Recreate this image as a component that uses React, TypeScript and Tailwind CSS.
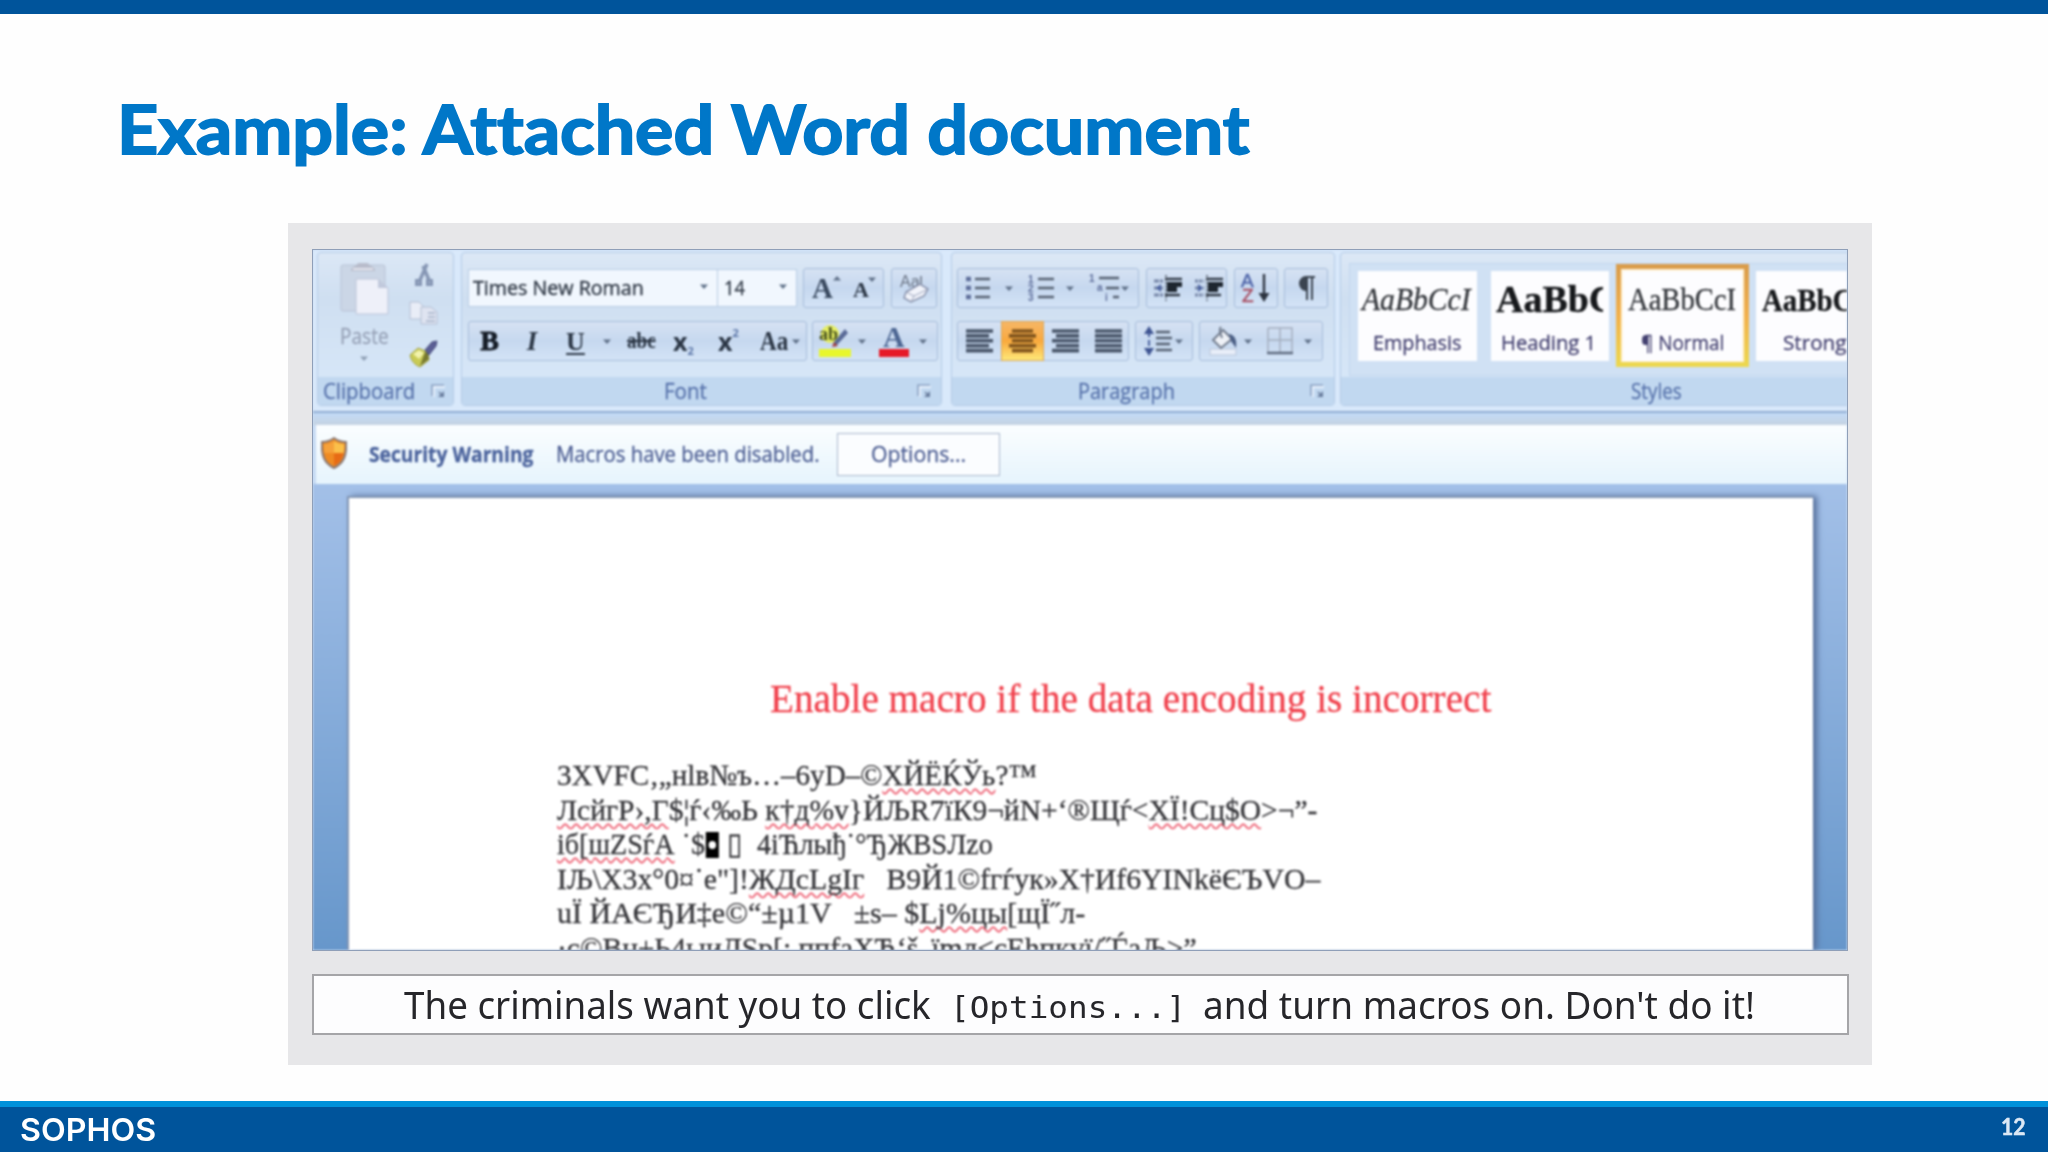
import React, { useLayoutEffect, useRef, useState } from "react";

const SANS = "font-['Open_Sans','Noto_Sans',sans-serif]";
const SERIF = "font-['Liberation_Serif',serif]";

/* Stretches a line of text horizontally so that it takes exactly `w` pixels. */
function Fit({ w, className = "", children }: { w: number; className?: string; children: React.ReactNode }) {
  const ref = useRef<HTMLSpanElement>(null);
  const [scale, setScale] = useState(1);
  useLayoutEffect(() => {
    if (ref.current) setScale(w / ref.current.offsetWidth);
  }, [w]);
  return (
    <span className={"block shrink-0 whitespace-pre " + className} style={{ width: w }}>
      <span ref={ref} className="inline-block origin-left" style={{ transform: `scaleX(${scale})` }}>
        {children}
      </span>
    </span>
  );
}

function Caret({ className = "" }: { className?: string }) {
  return (
    <svg viewBox="0 0 8 5" className={"h-[5px] w-2 shrink-0 " + className}>
      <path d="M0 0.5h8L4 5z" fill="#5f7088" />
    </svg>
  );
}

function Launcher({ className = "" }: { className?: string }) {
  return (
    <svg viewBox="0 0 15 15" className={"size-[15px] shrink-0 " + className} fill="none">
      <path d="M1 12V1h12" stroke="#8ea4c4" strokeWidth="1.6" />
      <path d="M3 13V3h11" stroke="#f3f8ff" strokeWidth="1.4" />
      <path d="M8 8l3 3" stroke="#6b7f9f" strokeWidth="1.6" />
      <path d="M13 7v6H7z" fill="#6b7f9f" />
    </svg>
  );
}

function Group({ className, label, children }: { className: string; label: React.ReactNode; children: React.ReactNode }) {
  return (
    <section className={"flex h-[154px] shrink-0 flex-col overflow-hidden rounded-[4px] border border-[#b4cbe6] bg-linear-to-b from-[#dce8f6] via-[#cfdff1] via-30% to-[#d9e9fa] " + className}>
      <div className="h-[124px] shrink-0">{children}</div>
      <div className={"flex flex-1 items-center bg-[#c1d8f0] text-[21px] leading-[28px] text-[#5873ab] [-webkit-text-stroke:0.3px] " + SANS}>{label}</div>
    </section>
  );
}

function Box({ className, children }: { className: string; children: React.ReactNode }) {
  return (
    <div className={"flex h-10 shrink-0 items-center rounded-[3px] border border-[#a6bcda] bg-linear-to-b from-[#d6e2f3] via-[#c6d8ef] via-50% to-[#d3e3f6] " + className}>
      {children}
    </div>
  );
}

function Lines({ rows, color = "#49566a" }: { rows: [number, number][]; color?: string }) {
  return (
    <svg viewBox="0 0 27 24" className="h-6 w-[27px] shrink-0" stroke={color} strokeWidth="3.6">
      {rows.map(([a, b], i) => (
        <path key={i} d={`M${a} ${2 + i * 4.9}H${b}`} />
      ))}
    </svg>
  );
}

function Indent({ flip = false }: { flip?: boolean }) {
  return (
    <svg viewBox="0 0 30 28" className="h-7 w-[30px] shrink-0" fill="none">
      <path d="M1 7h9M1 14h9M1 21h9" stroke="#7787a8" strokeWidth="3" strokeDasharray={flip ? "3 1" : "5 1"} />
      <path d={flip ? "M4 10l5 4-5 4z" : "M8 10l-5 4 5 4z"} fill="#4b62a0" />
      <path d="M13 1v26" stroke="#5b6572" strokeWidth="1.6" strokeDasharray="2 1.5" />
      <path d="M12 5h17M12 21h15" stroke="#343d49" strokeWidth="2.6" />
      <path d="M14 10.5h15M14 15.500h10" stroke="#1e262f" strokeWidth="4.8" />
    </svg>
  );
}

function Clipboard() {
  return (
    <Group
      className="w-[137px]"
      label={
        <>
          <Fit w={92} className="ml-[5px]">Clipboard</Fit>
          <Launcher className="ml-4" />
        </>
      }
    >
      <div className="flex pt-[6px] pl-[20px]">
        <div className="flex w-[52px] flex-col items-center">
          <svg viewBox="0 0 52 58" className="h-[58px] w-[52px]">
            <rect x="3" y="6" width="44" height="46" rx="2" fill="#cbd6e6" stroke="#b9c3d6" />
            <path d="M13 12c0-5 5-4 7-8h10c2 4 7 3 7 8z" fill="#b8bccb" />
            <path d="M15 10h20" stroke="#e5e6ef" strokeWidth="2" />
            <path d="M18 20h22l10 9v26H18z" fill="#eef0f9" stroke="#bcc4d8" />
            <path d="M40 20v9h10z" fill="#c1c9dc" />
          </svg>
          <Fit w={49} className={"mt-[5px] text-[21px] leading-7 text-[#98a3b8] [-webkit-text-stroke:0.3px] " + SANS}>Paste</Fit>
          <Caret className="mt-[6px] opacity-60" />
        </div>
        <div className="ml-[18px] flex w-8 flex-col items-center pt-1">
          <svg viewBox="0 0 20 24" className="h-6 w-5" fill="none" stroke="#8696b4">
            <path d="M13 1L6 17M9 3l6 14" strokeWidth="3.4" />
            <path d="M2.500 17.500h4v4h-4zM13.500 17.500h4v4h-4z" strokeWidth="3" />
          </svg>
          <svg viewBox="0 0 30 26" className="mt-[13px] h-[26px] w-[30px]" stroke="#b3bed3">
            <path d="M1 2h9l5 5v12H1z" fill="#e9edf7" />
            <path d="M12 7h10l6 5v12H12z" fill="#dfe4f1" />
            <path d="M19 13h7M19 17h7M17 21h9" strokeWidth="2" />
          </svg>
          <svg viewBox="0 0 32 30" className="mt-[13px] h-[30px] w-8">
            <path d="M2 16l8-7 10 4 1 8-9 7C7 26 3 22 2 16z" fill="#c9cb55" stroke="#a5a755" />
            <path d="M5 15l6-4 5 3-5 6z" fill="#f2f3ac" />
            <path d="M12 27l9-7-1-6-3-1z" fill="#77792f" />
            <path d="M17 11l7-8 5-1-1 5-7 9z" fill="#5b5f95" stroke="#454a7a" />
          </svg>
        </div>
      </div>
    </Group>
  );
}

function FontGroup() {
  return (
    <Group
      className="ml-[7px] w-[481px]"
      label={
        <>
          <Fit w={43} className="ml-[202px]">Font</Fit>
          <Launcher className="ml-[210px]" />
        </>
      }
    >
      <div className="flex pt-[15px] pl-[6px]">
        <div className={"mt-px flex h-[38px] w-[250px] items-center border border-[#b8cce4] bg-[#f1f7fe] pl-[4px] text-[20px] leading-[38px] text-[#333c49] [-webkit-text-stroke:0.4px] " + SANS}>
          <Fit w={171}>Times New Roman</Fit>
          <Caret className="mb-1 ml-[56px]" />
        </div>
        <div className={"mt-px flex h-[38px] w-[79px] items-center border border-l-0 border-[#b8cce4] bg-[#f1f7fe] pl-[6px] text-[20px] leading-[38px] text-[#333c49] [-webkit-text-stroke:0.4px] " + SANS}>
          <Fit w={21}>14</Fit>
          <Caret className="mb-1 ml-[34px]" />
        </div>
        <Box className={"ml-[6px] w-[81px] font-bold text-[#3a4a60] " + SERIF}>
          <span className="ml-2 w-[21px] text-[29px] leading-10">A</span>
          <Caret className="mb-5 rotate-180" />
          <span className="mt-1 ml-[12px] w-[15px] text-[22px] leading-9 text-[#2b3645]">A</span>
          <Caret className="mb-[18px]" />
        </Box>
        <Box className="ml-[7px] w-[46px] justify-center">
          <svg viewBox="0 0 32 32" className="size-8">
            <text x="2" y="15" fontSize="16" fill="#6b7585" fontFamily="Liberation Sans">Aa</text>
            <path d="M23 4v10" stroke="#6b7585" strokeWidth="1.5" />
            <path d="M8 20L22 12l8 5-4 7-13 6-7-4z" fill="#f2f4fb" stroke="#8791ab" strokeWidth="1.5" />
            <path d="M8 20l8 4-3 6M16 24l14-7" fill="none" stroke="#9aa3ba" />
          </svg>
        </Box>
      </div>
      <div className="mt-[13px] flex pl-[6px]">
        <Box className={"w-[339px] text-[#2b3645] " + SERIF}>
          <span className="w-[41px] text-center text-[28px] font-bold text-[#151c26] [-webkit-text-stroke:0.8px]">B</span>
          <span className="w-[44px] text-center text-[27px] font-bold italic">I</span>
          <span className="w-[43px] text-center text-[26px] font-bold underline decoration-2 underline-offset-[3px]">U</span>
          <Caret className="ml-[6px]" />
          <Fit w={29} className="ml-[16px] text-[23px] font-bold">
            <span className="line-through decoration-2">abc</span>
          </Fit>
          <span className={"ml-[17px] flex w-[26px] items-end text-[25px] leading-8 font-bold " + SANS}>
            x<span className="text-[11px] leading-[12px] text-[#5d77a8]">2</span>
          </span>
          <span className={"ml-[19px] flex w-[25px] items-start text-[25px] leading-8 font-bold " + SANS}>
            x<span className="text-[11px] leading-[16px] text-[#5d77a8]">2</span>
          </span>
          <Fit w={28} className="ml-[17px] text-[28px] font-bold">Aa</Fit>
          <Caret className="ml-[4px]" />
        </Box>
        <Box className="ml-[5px] w-[126px]">
          <svg viewBox="0 0 36 34" className="ml-[5px] h-[34px] w-9">
            <circle cx="12" cy="10" r="9" fill="#e6ee62" />
            <text x="1" y="16" fontSize="18" fontWeight="bold" fill="#48521f" fontFamily="Liberation Serif">ab</text>
            <path d="M15 19l3 3 12-13-3-4z" fill="#596a97" />
            <path d="M14 23l2-5 4 4z" fill="#a4433e" />
            <rect x="1" y="25" width="32" height="8" fill="#e8f72c" />
          </svg>
          <Caret className="ml-[4px]" />
          <svg viewBox="0 0 32 34" className="ml-[12px] h-[34px] w-8">
            <text x="5" y="23" fontSize="30" fontWeight="bold" fill="#4c6592" fontFamily="Liberation Serif">A</text>
            <rect x="1" y="25" width="30" height="8" fill="#e61a28" />
          </svg>
          <Caret className="ml-[9px]" />
        </Box>
      </div>
    </Group>
  );
}

function ParagraphGroup() {
  return (
    <Group
      className="ml-[9px] w-[384px]"
      label={
        <>
          <Fit w={97} className="ml-[126px]">Paragraph</Fit>
          <Launcher className="ml-[135px]" />
        </>
      }
    >
      <div className="flex pt-[15px] pl-[5px]">
        <Box className="w-[182px] pl-[7px]">
          <svg viewBox="0 0 26 28" className="h-7 w-[26px] shrink-0" strokeWidth="2.6">
            <path d="M10 5h15M10 14h15M10 23h15" stroke="#566172" />
            <path d="M1 5h5M1 14h5M1 23h5" stroke="#5f6f9b" strokeWidth="4.4" />
          </svg>
          <Caret className="ml-[14px]" />
          <svg viewBox="0 0 28 28" className="ml-[14px] h-7 w-7 shrink-0">
            <path d="M11 5h16M11 14h16M11 23h16" stroke="#566172" strokeWidth="2.6" />
            <g fontSize="10" fill="#5f6f9b" fontFamily="Liberation Sans" fontWeight="bold">
              <text x="1" y="9">1</text>
              <text x="1" y="18">2</text>
              <text x="1" y="27">3</text>
            </g>
          </svg>
          <Caret className="ml-[11px]" />
          <svg viewBox="0 0 34 30" className="ml-[14px] h-[30px] w-[34px] shrink-0">
            <path d="M11 5h20M18 15h13M25 24h6" stroke="#566172" strokeWidth="2.4" />
            <g fontSize="10" fill="#5f6f9b" fontFamily="Liberation Sans" fontWeight="bold">
              <text x="1" y="9">1</text>
              <text x="9" y="18">a</text>
              <text x="17" y="28">i</text>
            </g>
          </svg>
          <Caret className="-ml-[1px]" />
        </Box>
        <Box className="ml-[7px] w-[81px] gap-[11px] pl-[6px]">
          <Indent />
          <Indent flip />
        </Box>
        <Box className="ml-[7px] w-[44px] justify-center">
          <svg viewBox="0 0 32 34" className="h-[34px] w-8" fontFamily="Liberation Sans" fontSize="19">
            <text x="1" y="16" fill="#4e64a8" stroke="#4e64a8" strokeWidth="0.5">A</text>
            <text x="2" y="31" fill="#a85064" stroke="#a85064" strokeWidth="0.5">Z</text>
            <path d="M24 3v22" stroke="#2d3440" strokeWidth="2.4" />
            <path d="M18.500 22h11L24 31z" fill="#2d3440" />
          </svg>
        </Box>
        <Box className="ml-[6px] w-[44px] justify-center">
          <svg viewBox="0 0 20 26" className="h-[26px] w-5">
            <path d="M10 2a6 6.500 0 000 13z" fill="#3b4450" stroke="#3b4450" strokeWidth="2" />
            <path d="M11 2v23M16 2v23M9 2h10" stroke="#3b4450" strokeWidth="2" />
          </svg>
        </Box>
      </div>
      <div className="mt-[13px] flex pl-[5px]">
        <Box className="w-[172px] pl-[8px]">
          <Lines rows={[[0, 27], [0, 23], [0, 27], [0, 23], [0, 27]]} />
          <div className="ml-[8px] flex h-10 w-[43px] shrink-0 items-center justify-center border border-[#dca858] bg-linear-to-b from-[#f6b665] via-[#f9a93c] via-50% to-[#fde878]">
            <Lines color="#80541d" rows={[[3, 24], [0, 27], [3, 24], [0, 27], [3, 24]]} />
          </div>
          <span className="w-[8px] shrink-0" />
          <Lines rows={[[0, 27], [4, 27], [0, 27], [4, 27], [0, 27]]} />
          <span className="w-[16px] shrink-0" />
          <Lines rows={[[0, 27], [0, 27], [0, 27], [0, 27], [0, 27]]} />
        </Box>
        <Box className="ml-[6px] w-[58px] pl-[7px]">
          <svg viewBox="0 0 30 32" className="h-8 w-[30px] shrink-0">
            <path d="M6 6v20" stroke="#4b62a0" strokeWidth="2" strokeDasharray="6 3" />
            <path d="M1 9l5-8 5 8zM1 23l5 8 5-8z" fill="#3f5592" />
            <path d="M13 7h14M13 13h16M13 19h14M13 25h16" stroke="#566172" strokeWidth="2.500" />
          </svg>
          <Caret className="ml-[2px]" />
        </Box>
        <Box className="ml-[6px] w-[124px] pl-[7px]">
          <svg viewBox="0 0 32 32" className="size-8 shrink-0">
            <rect x="3" y="24" width="26" height="6" fill="#e9eff9" stroke="#b9c5da" />
            <path d="M6 15L16 5l9 9-11 9z" fill="#eef1f7" stroke="#737d8e" strokeWidth="2" />
            <path d="M14 2c-3 3 0 7 1 11" fill="none" stroke="#737d8e" strokeWidth="2" />
            <path d="M22 9c6 1 8 6 7 14l-5-7z" fill="#4b5f85" />
          </svg>
          <Caret className="ml-[5px]" />
          <svg viewBox="0 0 28 30" className="ml-[14px] h-[30px] w-7 shrink-0" fill="none" stroke="#a4aebf" strokeWidth="1.5">
            <path d="M2 2h24v25M2 2v25M14 2v25M2 14h24" />
            <path d="M1 27h26" stroke="#606c80" strokeWidth="2.500" />
          </svg>
          <Caret className="ml-[10px]" />
        </Box>
      </div>
    </Group>
  );
}

function StyleCard({ className, sample, name }: { className: string; sample: React.ReactNode; name: React.ReactNode }) {
  return (
    <div className={"flex h-[90px] shrink-0 flex-col overflow-hidden bg-[#fdfdff] " + className}>
      <div className={"h-[58px] pt-[9px] leading-[40px] text-[#33363b] [-webkit-text-stroke:0.3px] " + SERIF}>{sample}</div>
      <div className={"text-[20px] leading-[28px] text-[#434070] [-webkit-text-stroke:0.3px] " + SANS}>{name}</div>
    </div>
  );
}

function StylesGroup() {
  return (
    <Group
      className="ml-[5px] w-[520px]"
      label={<Fit w={51} className="ml-[290px]">Styles</Fit>}
    >
      <div className="mt-[10px] ml-[8px] flex h-[113px] w-[520px] border border-[#c3d6ee] bg-[#d0e1f4] pl-[8px]">
        <StyleCard
          className="mt-[7px] w-[119px]"
          sample={<Fit w={109} className="ml-[4px] text-[31px] italic">AaBbCcI</Fit>}
          name={<Fit w={88} className="ml-[15px]">Emphasis</Fit>}
        />
        <StyleCard
          className="mt-[7px] ml-[14px] w-[118px]"
          sample={
            <div className="ml-[5px] w-[107px] overflow-hidden">
              <Fit w={120} className="text-[37px] font-bold text-[#17191c]">AaBbC</Fit>
            </div>
          }
          name={<Fit w={95} className="ml-[10px]">Heading 1</Fit>}
        />
        <div className="ml-[7px] h-[103px] w-[133px] shrink-0 bg-linear-to-b from-[#d99c4b] via-[#f2b04c] to-[#ecd94f] p-[5px]">
          <div className="h-full overflow-hidden bg-[#fff3da] p-[2px]">
            <StyleCard
              className="w-[119px]"
              sample={<Fit w={108} className="ml-[5px] text-[31px]">AaBbCcI</Fit>}
              name={<Fit w={83} className="ml-[18px]">¶ Normal</Fit>}
            />
          </div>
        </div>
        <StyleCard
          className="mt-[7px] ml-[7px] w-[119px]"
          sample={<Fit w={91} className="ml-[6px] text-[32px] font-bold text-[#17191c]">AaBbC</Fit>}
          name={<Fit w={63} className="ml-[27px]">Strong</Fit>}
        />
      </div>
    </Group>
  );
}

function Bad({ children }: { children: React.ReactNode }) {
  return (
    <span className="underline decoration-[#ee6678] decoration-wavy decoration-[1.5px] underline-offset-[3px] [text-decoration-skip-ink:none]">
      {children}
    </span>
  );
}

function Garbled() {
  return (
    <div className={"ml-[208px] text-[30px] leading-[34.5px] text-[#343438] [-webkit-text-stroke:0.3px] " + SERIF}>
      <Fit w={480} className="h-[34.5px]">3XVFC‚„нlв№ъ…–6yD–©<Bad>ХЙЁЌЎь</Bad>?™</Fit>
      <Fit w={760} className="h-[34.5px]"><Bad>ЛсйгР›,Г</Bad>$¦ѓ‹‰Ь <Bad>к†д%v</Bad>{"}"}ЙЉR7їК9¬йN+‘®Щѓ&lt;<Bad>ХЇ!Сц$О</Bad>&gt;¬”-</Fit>
      <Fit w={436} className="h-[34.5px]">
        <Bad>іб[шZЅѓА</Bad> ˙$<span className="mx-px inline-block h-[26px] w-[14px] bg-black px-[3px] pt-[9px] align-[-4px]"><span className="block size-2 rounded-full bg-white" /></span>
        {" ▯  4іЋлыђ˙°ЂЖВЅЛzo"}
      </Fit>
      <Fit w={763} className="h-[34.5px]">ІЉ\Х3х°0¤˙е"]!<Bad>ЖДсLgІг</Bad>{"   В9Й1©fгѓук»Х†Иf6YІNkёЄЪVО–"}</Fit>
      <Fit w={528} className="h-[34.5px]">{"uЇ ЙАЄЂИ‡е©“±µ1V   ±s– $"}<Bad>Lj%цы</Bad>[щЇ˝л-</Fit>
      <Fit w={640} className="h-[34.5px]">·с©Вн±Ь4ыиЛЅр[; ппfаХЂ‘š„їmл&lt;єЕhпкvї/˝ЃаЉ&gt;”</Fit>
    </div>
  );
}

function WordWindow() {
  return (
    <div className="flex h-[702px] w-[1536px] flex-col overflow-hidden border border-[#8f9fb8] bg-[#c6daf3]">
      <div className="flex min-h-0 flex-1 flex-col blur-[0.8px]">
        <div className="flex h-[163px] shrink-0 overflow-hidden border-b-2 border-[#90acd2] bg-[#d9e9fb] pt-[2px] pl-[4px]">
          <Clipboard />
          <FontGroup />
          <ParagraphGroup />
          <StylesGroup />
        </div>
        <div className="h-[12px] shrink-0 bg-linear-to-b from-[#c3dbf7] to-[#c5d3e2]" />
        <div className={"ml-[3px] flex h-[59px] shrink-0 items-center bg-linear-to-b from-[#fbfeff] to-[#e6f4fd] text-[21px] leading-[30px] text-[#4d5e93] [-webkit-text-stroke:0.3px] " + SANS}>
          <svg viewBox="0 0 26 32" className="mb-[3px] ml-[5px] h-8 w-[26px] shrink-0">
            <path d="M13 1c4 3 8 4 12 4 1 13-2 21-12 26C3 26 0 18 1 5c4 0 8-1 12-4z" fill="#ef8a22" stroke="#8a7a76" strokeWidth="2" />
            <path d="M13 4v12H3.500c-.6-3-.7-6-.5-9 4 0 7-1 10-3z" fill="#f6a13a" />
            <path d="M13 4c3 2 6 3 10 3 .2 3 .1 6-.5 9H13z" fill="#fbc04a" />
            <path d="M13 16h9.500c-1 6-4 10-9.500 13z" fill="#e76b15" />
          </svg>
          <Fit w={164} className="mb-[2px] ml-[22px] font-bold text-[#4a629c]">Security Warning</Fit>
          <Fit w={263} className="mb-[2px] ml-[23px]">Macros have been disabled.</Fit>
          <div className="mb-px ml-[18px] flex h-[43px] w-[163px] items-center justify-center border border-[#a9b6cc] bg-[#fbfdff]">
            <Fit w={95}>Options...</Fit>
          </div>
        </div>
        <div className="flex min-h-0 flex-1 bg-linear-to-b from-[#a3c0e8] to-[#6797cb] pt-[12px]">
          <div className="ml-[34px] h-full w-[1466px] shrink-0 overflow-hidden border-t-2 border-l-2 border-[#8296b4] bg-white shadow-[4px_0_6px_#566f9a]">
            <Fit w={721} className={"mt-[181px] ml-[421px] h-[40px] text-[40px] leading-[40px] text-[#f0404c] [-webkit-text-stroke:0.3px] " + SERIF}>
              Enable macro if the data encoding is incorrect
            </Fit>
            <div className="h-[39px]" />
            <Garbled />
          </div>
        </div>
      </div>
    </div>
  );
}

export default function App() {
  return (
    <div className="flex h-[1152px] w-[2048px] flex-col overflow-hidden bg-[#fefefe]">
      <div className="h-[14px] shrink-0 bg-[#00549b]" />
      <h1 className="mt-[78px] ml-[117px] h-[72px] shrink-0 font-['Lato',sans-serif] text-[67px] leading-[72px] font-bold text-[#0077c8] [-webkit-text-stroke:1.8px] [font-variant-ligatures:none]">
        <Fit w={1132}>Example: Attached Word document</Fit>
      </h1>
      <main className="mt-[59px] ml-[288px] flex h-[842px] w-[1584px] shrink-0 flex-col bg-[#e7e7e9] pt-[26px] pl-[24px]">
        <WordWindow />
        <div className="mt-[23px] flex h-[61px] w-[1537px] items-center border-2 border-[#a5a5a8] bg-[#fdfdfe] font-['Noto_Sans','Open_Sans',sans-serif] text-[38px] leading-[57px] text-[#26262a]">
          <Fit w={527} className="ml-[90px]">The criminals want you to click</Fit>
          <Fit w={236} className="mt-[5px] ml-[19px] font-['DejaVu_Sans_Mono',monospace] text-[31px] leading-[52px]">[Options...]</Fit>
          <Fit w={552} className="ml-[17px]">and turn macros on. Don't do it!</Fit>
        </div>
      </main>
      <div className="flex-1" />
      <footer className="flex h-[51px] shrink-0 items-center justify-between border-t-[6px] border-[#0091da] bg-[#00549b] pr-[22px] pl-[20px] text-white">
        <Fit w={136} className="font-['Inter',sans-serif] text-[31px] leading-[45px] font-semibold">SOPHOS</Fit>
        <Fit w={25} className="mb-[6px] font-['Lato',sans-serif] text-[22px] leading-[39px] font-bold text-[#dce8f5] [-webkit-text-stroke:0.5px]">12</Fit>
      </footer>
    </div>
  );
}
